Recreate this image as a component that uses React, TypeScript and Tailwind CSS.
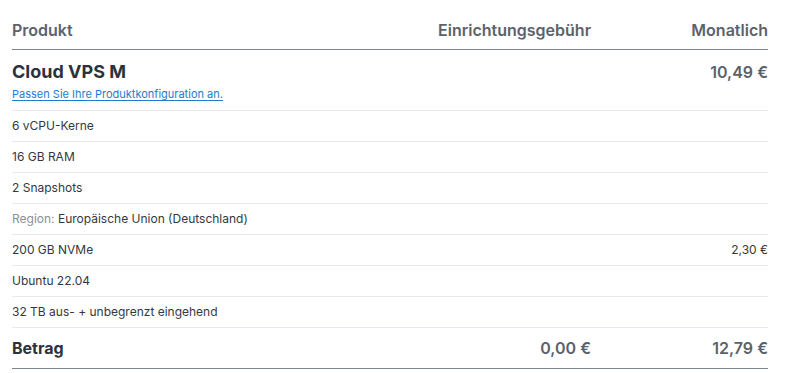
import React from 'react';

interface LineItem {
  label: string;
  prefix?: string;
  monthly?: string;
}

const items: LineItem[] = [
  { label: '6 vCPU-Kerne' },
  { label: '16 GB RAM' },
  { label: '2 Snapshots' },
  { label: 'Europäische Union (Deutschland)', prefix: 'Region:' },
  { label: '200 GB NVMe', monthly: '2,30 €' },
  { label: 'Ubuntu 22.04' },
  { label: '32 TB aus- + unbegrenzt eingehend' },
];

const cols = 'grid grid-cols-[1fr_200px_177px]';

export default function App() {
  return (
    <div className="min-h-screen bg-white pl-3 pr-[18px] font-['Inter',sans-serif]">
      {/* Table header */}
      <div className={`${cols} h-[50px] items-end border-b border-[#7d8591] pb-[7px] text-[16px] font-semibold text-[#5b626c]`}>
        <div>Produkt</div>
        <div className="text-right">Einrichtungsgebühr</div>
        <div className="text-right">Monatlich</div>
      </div>

      {/* Product row */}
      <div className={`${cols} h-[61px] border-b border-[#e6eaef] pt-[10px]`}>
        <div className="flex flex-col">
          <span className="text-[18px] font-bold leading-[24px] text-[#2c323a]">Cloud VPS M</span>
          <a href="#" className="mt-[2px] text-[11px] leading-[16px] text-[#1d7bd0] underline underline-offset-2">
            Passen Sie Ihre Produktkonfiguration an.
          </a>
        </div>
        <div />
        <div className="text-right text-[16px] font-semibold leading-[24px] text-[#5b626c]">10,49 €</div>
      </div>

      {/* Configuration lines */}
      {items.map((item) => (
        <div
          key={item.label}
          className={`${cols} h-[31px] items-center border-b border-[#e6eaef] text-[12px] text-[#33383f]`}
        >
          <div>
            {item.prefix && <span className="text-[#8a9099]">{item.prefix} </span>}
            {item.label}
          </div>
          <div />
          <div className="text-right text-[12px]">{item.monthly}</div>
        </div>
      ))}

      {/* Total */}
      <div className={`${cols} h-[41px] items-center border-b border-[#7d8591] text-[16px] font-semibold text-[#5b626c]`}>
        <div className="font-bold text-[#2c323a]">Betrag</div>
        <div className="text-right">0,00 €</div>
        <div className="text-right">12,79 €</div>
      </div>
    </div>
  );
}
